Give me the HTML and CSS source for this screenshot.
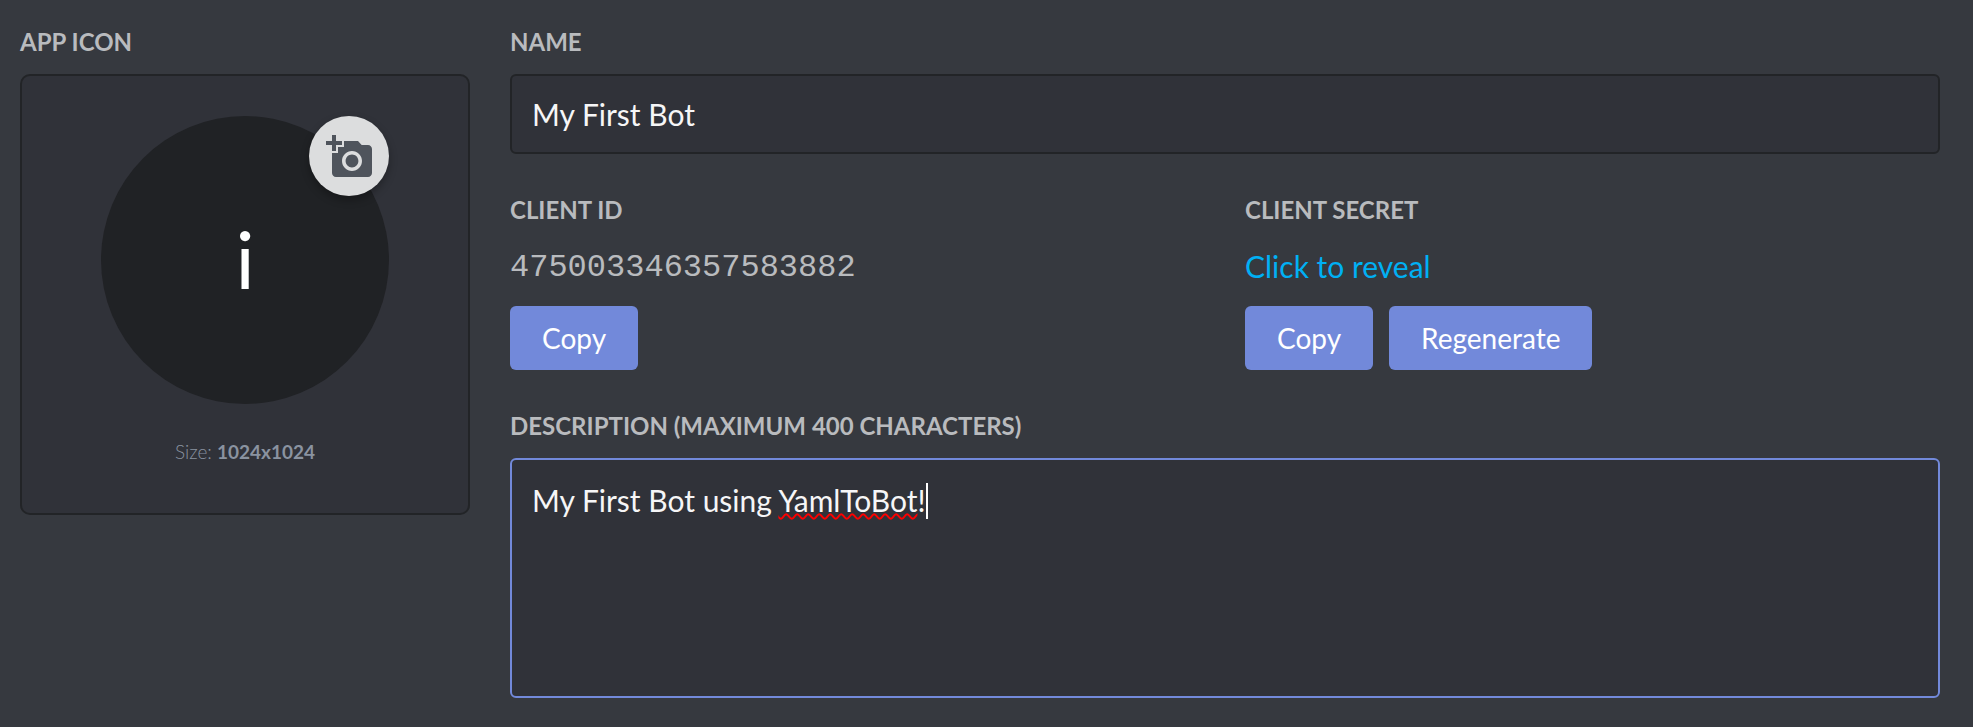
FILE: index.html
```
<!DOCTYPE html>
<html lang="en">
<head>
<meta charset="utf-8">
<meta name="viewport" content="width=device-width, initial-scale=1">
<title>My First Bot</title>
<link rel="stylesheet" href="styles.css">
</head>
<body>
<main class="settings">
  <section class="icon-column">
    <h2 class="label">APP ICON</h2>
    <div class="icon-card">
      <div class="avatar">
        <span class="avatar-initial">i</span>
        <button class="upload" type="button" aria-label="Upload icon">
          <svg class="upload-icon" viewBox="0 0 23 23" aria-hidden="true">
            <path fill-rule="evenodd" d="M3 4V1h2v3h3v2H5v3H3V6H0V4zM6 10V7h3V4h7l1.830 2H21c1.100 0 2 .9 2 2v12c0 1.100-.9 2-2 2H5c-1.100 0-2-.9-2-2V10zM13 19c2.760 0 5-2.240 5-5s-2.240-5-5-5-5 2.240-5 5 2.240 5 5 5zM9.800 14c0 1.770 1.430 3.200 3.200 3.200s3.200-1.430 3.200-3.200-1.430-3.200-3.200-3.200-3.200 1.430-3.200 3.200z"/>
          </svg>
        </button>
      </div>
      <p class="size">Size: <strong>1024x1024</strong></p>
    </div>
  </section>

  <form class="details">
    <div class="field">
      <label class="label" for="name">NAME</label>
      <input class="control" id="name" type="text" value="My First Bot">
    </div>
    <div class="credentials">
      <section class="field">
        <h2 class="label">CLIENT ID</h2>
        <p class="value client-id">475003346357583882</p>
        <div class="actions">
          <button class="button" type="button">Copy</button>
        </div>
      </section>
      <section class="field">
        <h2 class="label">CLIENT SECRET</h2>
        <p class="value"><a class="reveal" href="#secret">Click to reveal</a></p>
        <div class="actions">
          <button class="button" type="button">Copy</button>
          <button class="button" type="button">Regenerate</button>
        </div>
      </section>
    </div>
    <div class="field">
      <label class="label" for="description">DESCRIPTION (MAXIMUM 400 CHARACTERS)</label>
      <div class="editor">
        <textarea class="control description" id="description" maxlength="400" spellcheck="false">My First Bot using YamlToBot!</textarea>
        <div class="marks" aria-hidden="true">My First Bot using <span class="misspelled">YamlToBot</span>!<span class="caret"></span></div>
      </div>
    </div>
  </form>
</main>
</body>
</html>
```
FILE: styles.css
```
* {
  box-sizing: border-box;
}

body {
  margin: 0;
  background: #36393f;
  color: #b9bbbe;
  font: 400 30px/48px Lato, "Open Sans", sans-serif;
}

.settings {
  display: grid;
  grid-template-columns: 450px minmax(0, 1fr);
  gap: 40px;
  align-items: start;
  padding: 26px 33px 28px 20px;
}

.label {
  display: block;
  margin: 0;
  color: #b9bbbe;
  font-size: 24px;
  font-weight: 700;
  line-height: 32px;
}

.icon-column,
.field {
  display: flex;
  flex-direction: column;
  gap: 16px;
}

.icon-card {
  display: flex;
  flex-direction: column;
  align-items: center;
  gap: 30px;
  padding: 40px 40px 43px;
  border: 2px solid #222427;
  border-radius: 10px;
  background: #303239;
}

.avatar {
  position: relative;
  display: flex;
  align-items: center;
  justify-content: center;
  width: 288px;
  height: 288px;
  padding-bottom: 4px;
  border-radius: 50%;
  background: #202225;
}

.avatar-initial {
  color: #fff;
  font-size: 80px;
  line-height: 96px;
}

.upload {
  position: absolute;
  top: 0;
  right: 0;
  width: 80px;
  height: 80px;
  padding: 17px;
  border: 0;
  border-radius: 50%;
  background: #dcddde;
  box-shadow: 0 4px 8px rgba(0, 0, 0, 0.3);
  cursor: pointer;
}

.upload-icon {
  display: block;
  width: 46px;
  height: 46px;
  fill: #4f545c;
}

.size {
  margin: 0;
  color: #8a93a0;
  font-size: 19px;
  font-weight: 300;
  line-height: 36px;
}

.size strong {
  font-weight: 700;
}

.details {
  display: flex;
  flex-direction: column;
  gap: 40px;
}

.control {
  display: block;
  width: 100%;
  height: 80px;
  padding: 0 20px;
  border: 2px solid #222427;
  border-radius: 6px;
  outline: 0;
  background: #303239;
  color: #f6f6f7;
  font: inherit;
}

.credentials {
  display: grid;
  grid-template-columns: 1fr 1fr;
  gap: 40px;
}

.value {
  margin: 0;
}

.client-id {
  padding-top: 4px;
  font-family: "Liberation Mono", monospace;
  font-size: 32px;
  line-height: 44px;
}

.reveal {
  color: #00b0f4;
  text-decoration: none;
}

.actions {
  display: flex;
  gap: 16px;
}

.button {
  height: 64px;
  padding: 0 32px;
  border: 0;
  border-radius: 6px;
  background: #7289da;
  color: #fff;
  font: inherit;
  font-size: 28px;
  cursor: pointer;
}

.editor {
  position: relative;
}

.description {
  height: 240px;
  padding: 16px 20px;
  border-color: #7289da;
  resize: none;
}

.marks {
  position: absolute;
  inset: 0;
  padding: 18px 22px;
  color: transparent;
  pointer-events: none;
}

.misspelled {
  text-decoration: underline wavy #f00 2px;
  text-decoration-skip-ink: none;
}

.caret {
  display: inline-block;
  height: 36px;
  border-left: 2px solid #fff;
  vertical-align: -7px;
}
```
